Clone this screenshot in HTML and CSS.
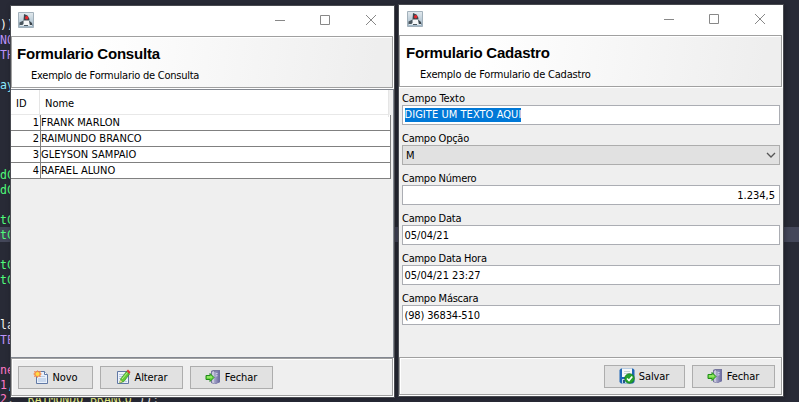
FILE: index.html
```html
<!DOCTYPE html>
<html lang="pt-BR">
<head>
<meta charset="utf-8">
<title>Formularios</title>
<link rel="stylesheet" href="styles.css">
</head>
<body>
<svg class="defs" width="0" height="0" aria-hidden="true">
  <defs>
    <linearGradient id="door" x1="0" x2="1"><stop offset="0" stop-color="#aaaacb"/><stop offset="1" stop-color="#6868a0"/></linearGradient>
    <linearGradient id="sky" x1="0" x2="0" y1="0" y2="1"><stop offset="0" stop-color="#e3eaee"/><stop offset="1" stop-color="#9fb6c7"/></linearGradient>
    <symbol id="java" viewBox="0 0 16 16">
      <path d="M.5.500h15v15H.5z" fill="url(#sky)" stroke="#a3b1bb"/>
      <path d="M6 2l3.500 1.500L11.500 7l-.5 2H5.500z" fill="#3c464d"/>
      <path d="M5.500 8.500h5.500l1 5.500H5z" fill="#f7f8f9"/>
      <path d="M1.500 10.500l4-2V12l-2 1.500-2-.5z" fill="#4b575f"/>
      <path d="M11 8.500l3 2.500.5 2.500h-2.500z" fill="#3c464d"/>
      <path d="M2 13.500h12" stroke="#dfe6ea"/>
      <path d="M6 13.500h4" stroke="#4b575f"/>
      <circle cx="8.700" cy="5.800" r="1.700" fill="#e8262c"/>
    </symbol>
    <symbol id="new" viewBox="0 0 16 16">
      <path d="M3.500 2.500h8l3 3v9h-11z" fill="#e9f0fa" stroke="#6179a5"/>
      <path d="M11.500 2.500v3h3" fill="#fff" stroke="#6179a5"/>
      <path d="M5 9h8v4H5z" fill="#c9d8ed"/>
      <path d="M6 7.500h6" stroke="#b9cae4"/>
      <path d="M4.500 1l1 1.500L8 2l-.7 2L9 5l-1.700 1L8 8l-2.500-.5-1 1.500-1-1.500L1 8l.7-2L0 5l1.700-1L1 2l2.500.5z" fill="#f58a4a"/>
      <circle cx="4.500" cy="5" r="2" fill="#ffdc45"/>
    </symbol>
    <symbol id="edit" viewBox="0 0 16 16">
      <path d="M2.500 2.500h11v12h-11z" fill="#edf2fb" stroke="#6179a5"/>
      <path d="M4 5.500h6M4 7.500h4M4 9.500h2M10 12.500h2" stroke="#b9cae4"/>
      <path d="M11.500 2.500l3 2.500-5.500 7.500-4.500 1.500L6 9.500z" fill="#65ca37" stroke="#378b28" stroke-width=".7"/>
      <path d="M7 10l5.500-6.500" stroke="#b6f38d"/>
      <path d="M11.500 2l1.500-1.500L15.500 3l-1 2z" fill="#dc3c35"/>
      <path d="M5.500 11l1.700 1.700-3.200 1.300z" fill="#f1d398"/>
    </symbol>
    <symbol id="exit" viewBox="0 0 16 16">
      <path d="M6 2l2-1h7v12l-4 2H9l-3-1z" fill="#77779f"/>
      <path d="M7 3l2-1v12.500L7 13.500z" fill="#c8c8dc"/>
      <path d="M9 3l5.500-1.500v12L9 15z" fill="url(#door)"/>
      <path d="M10.500 5l2-.5M10.500 7l2-.3" stroke="#dcdcf0"/>
      <path d="M1 6.500h4V4.500L9 8.500l-4 4v-2H1z" fill="#69d73d" stroke="#218b1c"/>
      <path d="M2 8h5" stroke="#b8f48d"/>
    </symbol>
    <symbol id="save" viewBox="0 0 16 16">
      <path d="M.5 2L2 .5h12L15.500 2v12L14 15.500H2L.5 14z" fill="#1e66b6"/>
      <path d="M3 .5h10V9H3z" fill="#f5f7f8"/>
      <path d="M5 3.500h6M5 5.500h6" stroke="#c9d1d6"/>
      <path d="M3 11h7v4.500H3z" fill="#c2d8e8"/>
      <path d="M4 12h2v3H4z" fill="#24578f"/>
      <circle cx="10.500" cy="10.500" r="4.800" fill="#24a32e" stroke="#12781c" stroke-width=".7"/>
      <path d="M8 10.500l2 2 3.200-4" fill="none" stroke="#fff" stroke-width="1.700"/>
    </symbol>
    <symbol id="controls" viewBox="0 0 102 12">
      <path d="M0 6.500h10M45.500 1.500h9v9h-9z" fill="none" stroke="#888"/>
      <path d="M91 1l10 10M101 1L91 11" fill="none" stroke="#888"/>
    </symbol>
  </defs>
</svg>

<pre class="editor"><span class="row white">))</span><span class="row purple">NO</span><span class="row purple">TH</span><span class="row"></span><span class="row cyan">ay</span><span class="row"></span><span class="row"></span><span class="row"></span><span class="row"></span><span class="row"></span><span class="row green">dC</span><span class="row green">dC</span><span class="row"></span><span class="row green">tC</span><span class="row green current">tC</span><span class="row"></span><span class="row green">tC</span><span class="row green">tC</span><span class="row"></span><span class="row"></span><span class="row white">la</span><span class="row purple">TE</span><span class="row"></span><span class="row pink">ne</span><span class="row pink">1<i class="cyan">,</i></span><span class="row pink last">2<i class="white">, </i><i class="yellow">"RAIMUNDO BRANCO"</i><i class="white">));</i></span></pre>

<section class="window consulta">
  <div class="titlebar"><svg class="logo"><use href="#java"/></svg><svg class="controls"><use href="#controls"/></svg></div>
  <header class="heading"><h1>Formulario Consulta</h1><p>Exemplo de Formulario de Consulta</p></header>
  <div class="scroll">
    <div class="thead"><span>ID</span><span>Nome</span></div>
    <div class="record"><span>1</span><span>FRANK MARLON</span></div>
    <div class="record"><span>2</span><span>RAIMUNDO BRANCO</span></div>
    <div class="record"><span>3</span><span>GLEYSON SAMPAIO</span></div>
    <div class="record"><span>4</span><span>RAFAEL ALUNO</span></div>
  </div>
  <footer class="actions">
    <button class="novo"><svg><use href="#new"/></svg>Novo</button>
    <button><svg><use href="#edit"/></svg>Alterar</button>
    <button><svg><use href="#exit"/></svg>Fechar</button>
  </footer>
</section>

<section class="window cadastro">
  <div class="titlebar"><svg class="logo"><use href="#java"/></svg><svg class="controls"><use href="#controls"/></svg></div>
  <header class="heading"><h1>Formulario Cadastro</h1><p>Exemplo de Formulario de Cadastro</p></header>
  <div class="form">
    <div class="label">Campo Texto</div><div class="field"><span class="selected">DIGITE UM TEXTO AQUI</span></div>
    <div class="label">Campo Opção</div><div class="field combo"><span>M</span><svg class="chevron" viewBox="0 0 10 6"><path d="M1 1l4 4 4-4"/></svg></div>
    <div class="label">Campo Número</div><div class="field number">1.234,5</div>
    <div class="label">Campo Data</div><div class="field">05/04/21</div>
    <div class="label">Campo Data Hora</div><div class="field">05/04/21 23:27</div>
    <div class="label">Campo Máscara</div><div class="field phone">(98) 36834-510</div>
  </div>
  <footer class="actions">
    <button class="salvar"><svg><use href="#save"/></svg>Salvar</button>
    <button><svg><use href="#exit"/></svg>Fechar</button>
  </footer>
</section>
</body>
</html>
```

FILE: styles.css
```css
* { box-sizing: border-box; }
body {
  margin: 0;
  width: 799px;
  height: 402px;
  overflow: hidden;
  position: relative;
  background: #282a36;
  color: #000;
  font: 11px "DejaVu Sans Condensed", "DejaVu Sans", sans-serif;
  font-stretch: condensed;
}
.defs { position: absolute; }
svg { display: block; flex: none; }

.editor { margin: 0; padding-top: 17px; font: 11.5px/17px "DejaVu Sans Mono", monospace; }
.row { display: block; height: 15px; }
.row i { font-style: normal; }
.last { line-height: 15px; }
.current { background: #44475a; }
.white { color: #f8f8f2; }
.purple { color: #bd93f9; }
.cyan { color: #8be9fd; }
.green { color: #50fa7b; }
.pink { color: #ff79c6; }
.yellow { color: #f1fa8c; }

.window {
  position: absolute;
  display: flex;
  flex-direction: column;
  height: 393px;
  border: 1px solid #484a50;
  background: #fff;
  box-shadow: 1px 1px 5px rgba(0, 0, 0, .3);
}
.consulta { left: 10px; top: 5px; width: 385px; }
.cadastro { left: 398px; top: 4px; width: 386px; }
.titlebar {
  display: flex;
  justify-content: space-between;
  height: 30px;
  padding: 6px 17px 0 7px;
}
.cadastro .titlebar { padding-left: 8px; }
.logo { width: 16px; height: 16px; }
.controls { width: 102px; height: 12px; margin-top: 2px; }
.heading {
  height: 52px;
  margin-right: 1px;
  padding: 8px 5px 0;
  border: 1px solid #a0a0a0;
  background: linear-gradient(98deg, #fff 20%, #eee 95%);
  box-shadow: inset 1px 1px #fff, 1px 1px #fff;
}
.cadastro .heading { padding-left: 6px; }
.heading h1 { margin: 0; font: bold 15px/17px "Liberation Sans", sans-serif; letter-spacing: -.2px; }
.heading p { margin: 7px 0 0 14px; line-height: 14px; letter-spacing: -.24px; }
.cadastro .heading p { letter-spacing: -.19px; }

.scroll {
  height: 269px;
  margin-top: 1px;
  border: 1px solid #828790;
  border-left: 0;
  background: #efefef;
}
.thead, .record { display: grid; grid-template-columns: 29px 1fr; }
.thead { width: 378px; height: 25px; background: #fff; border-bottom: 1px solid #e8e8e8; line-height: 27px; }
.thead span { padding-left: 5px; border-right: 1px solid #e5e5e5; }
.record { width: 380px; height: 16px; grid-template-columns: 30px 1fr; background: #fff; border-bottom: 1px solid #808080; line-height: 15px; }
.record span { border-right: 1px solid #808080; white-space: nowrap; letter-spacing: .05px; }
.record span:first-child { padding-right: 1px; text-align: right; }

.actions {
  display: flex;
  gap: 7px;
  height: 38px;
  margin-right: 1px;
  padding: 7px 6px;
  border: 1px solid #a0a0a0;
  background: #efefef;
  box-shadow: inset 1px 1px #fff;
}
.cadastro .actions { justify-content: flex-end; }
button {
  display: flex;
  align-items: center;
  justify-content: center;
  gap: 4px;
  width: 83px;
  height: 23px;
  margin: 0;
  padding: 0 1px 1px 0;
  border: 1px solid #adadad;
  background: #e1e1e1;
  font: inherit;
  letter-spacing: -.1px;
  color: #000;
}
button svg { width: 16px; height: 16px; }
.novo { width: 75px; }
.salvar { width: 81px; }

.form { width: 384px; height: 270px; padding: 1px 3px 0; background: #efefef; border-top: 1px solid #fff; }
.label { height: 20px; line-height: 28px; letter-spacing: -.25px; }
.label:first-child { height: 16px; line-height: 20px; letter-spacing: -.1px; }
.field { display: flex; align-items: center; width: 378px; height: 20px; padding: 0 1.5px; border: 1px solid #abadb3; background: #fff; }
.phone { letter-spacing: -.15px; }
.selected { height: 14px; line-height: 14px; background: #0078d7; color: #fff; letter-spacing: .05px; }
.combo { justify-content: space-between; padding: 0 3px; background: #e1e1e1; border-color: #adadad; }
.number { justify-content: flex-end; padding-right: 4px; }
.chevron { width: 10px; height: 6px; fill: none; stroke: #555; stroke-width: 1.3; }
```
